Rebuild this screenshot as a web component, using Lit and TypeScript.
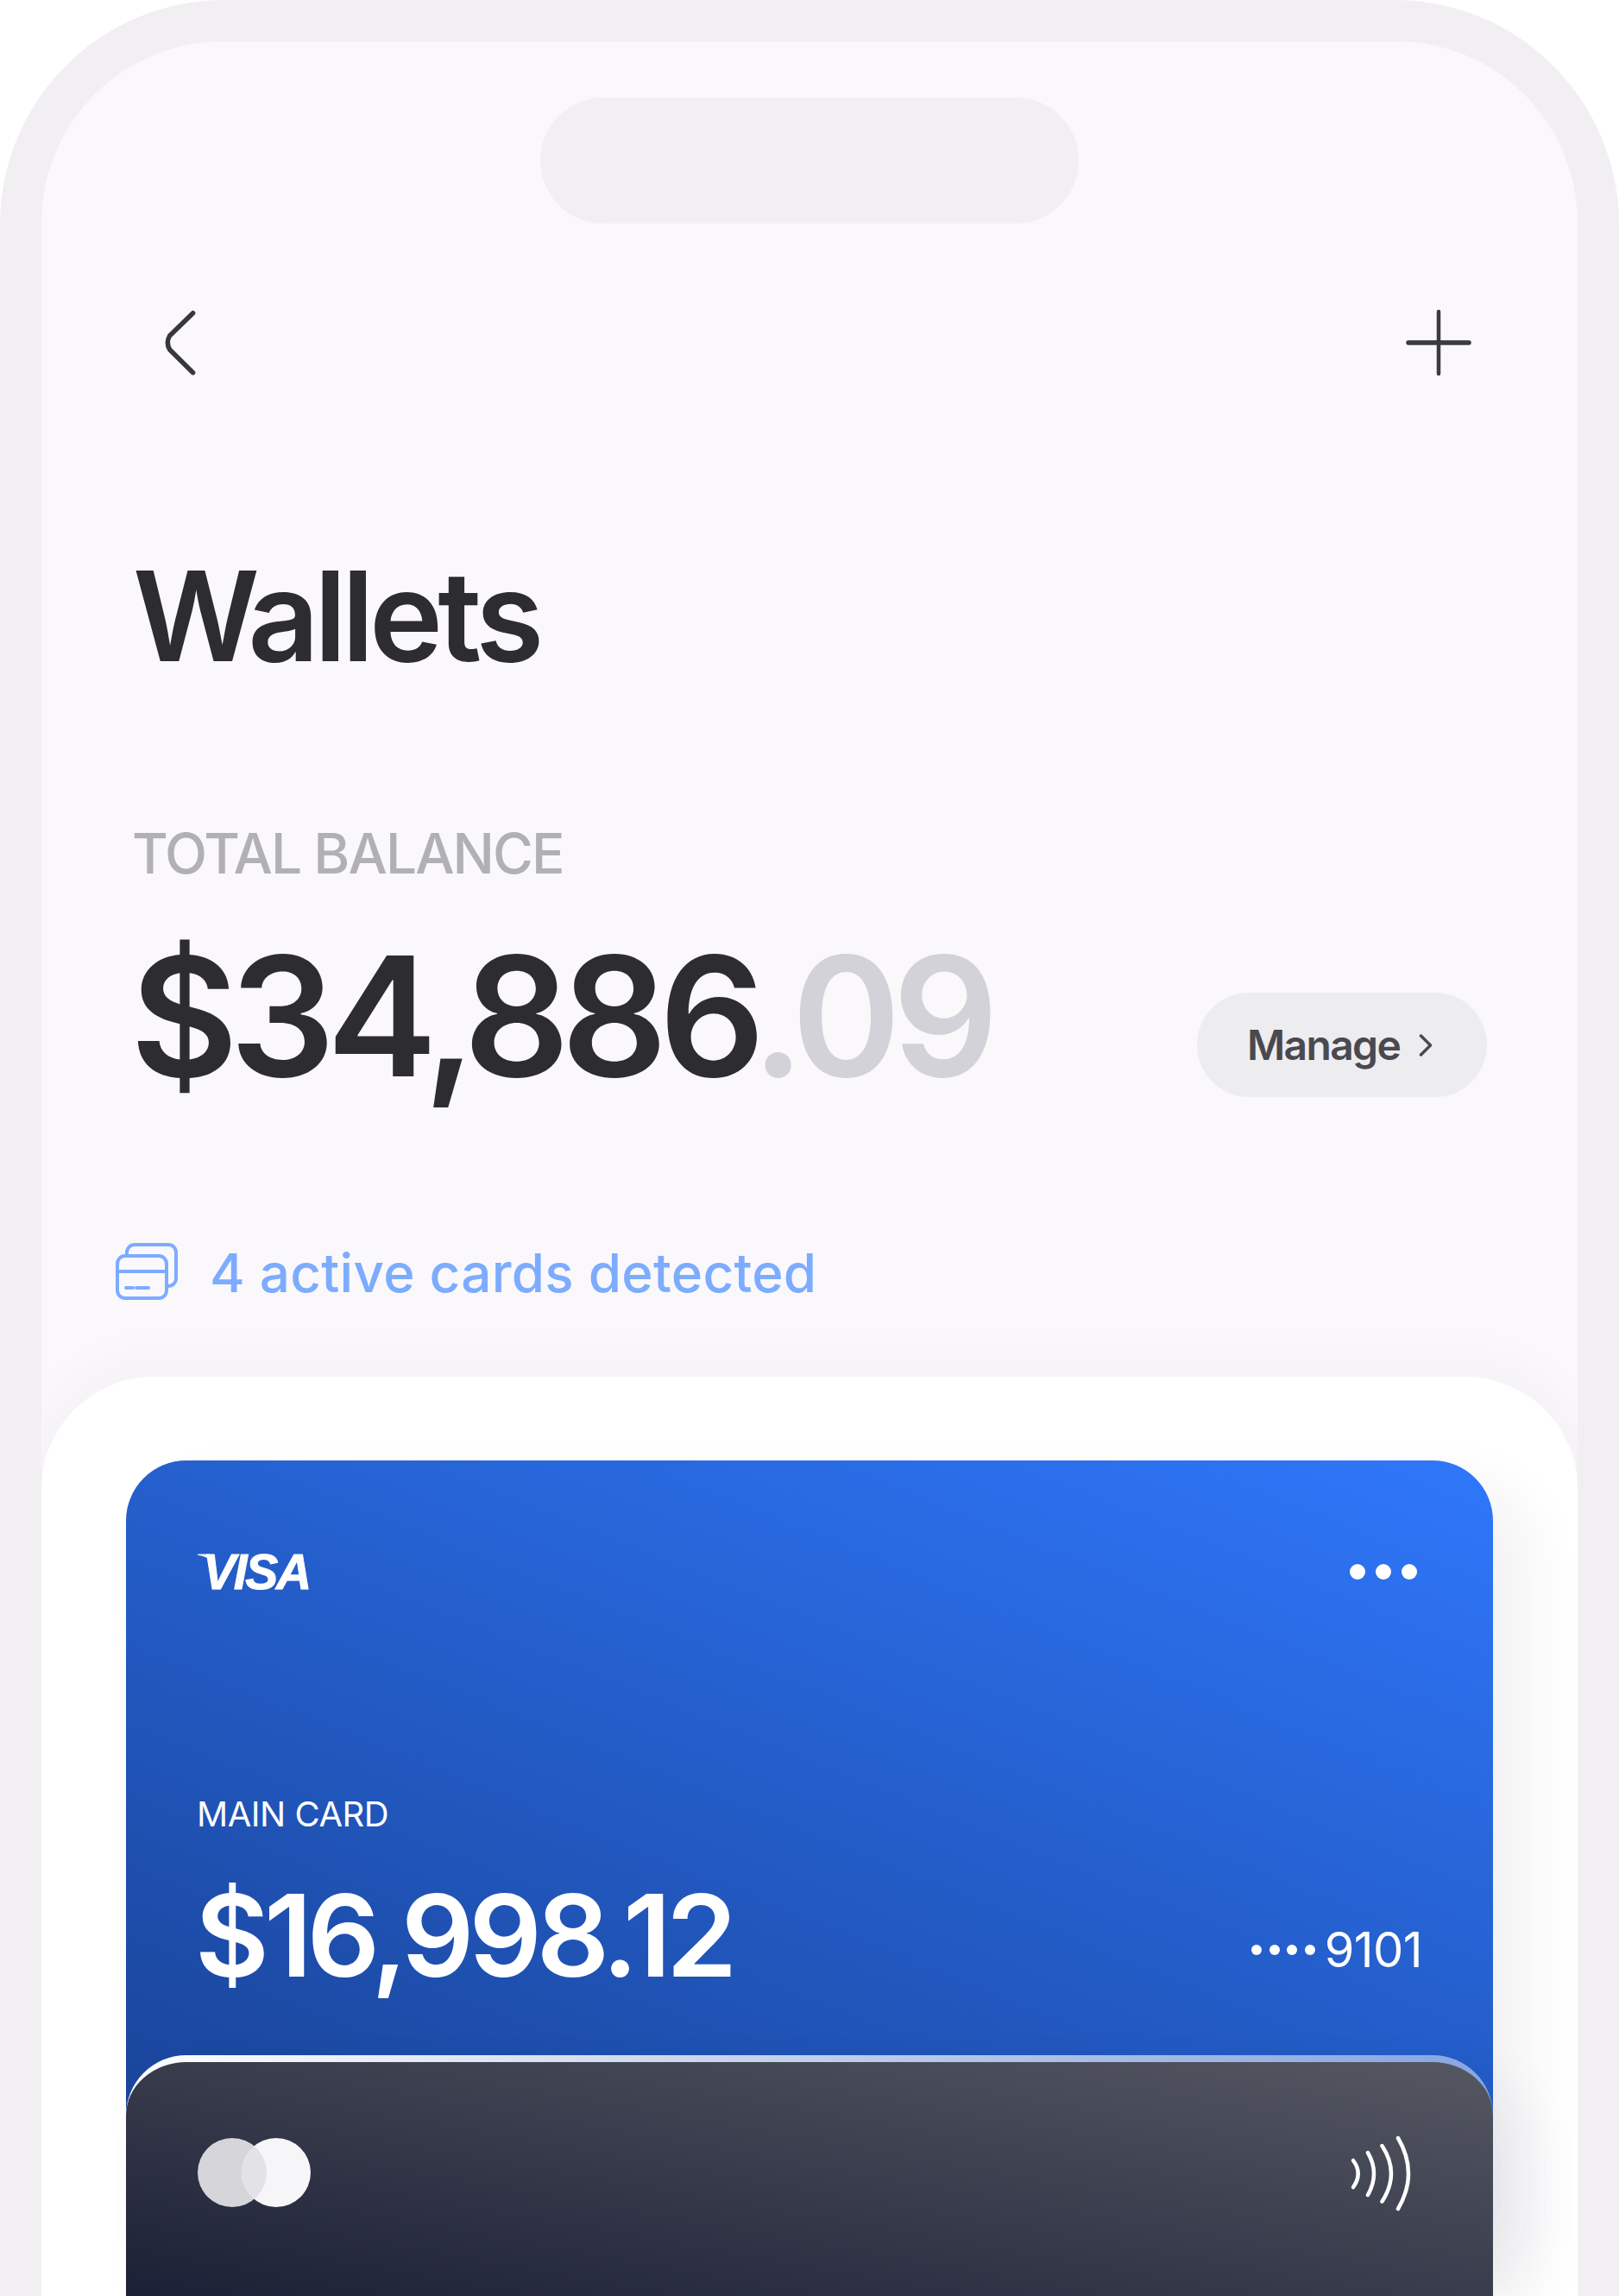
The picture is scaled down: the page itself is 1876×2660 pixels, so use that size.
import { LitElement, html, css } from "lit";
import { customElement } from "lit/decorators.js";

@customElement("app-root")
export class AppRoot extends LitElement {
  static styles = css`
    :host { display: block; width: 1876px; height: 2660px; overflow: hidden; background: #fff; font-family: Inter, "Liberation Sans", sans-serif; }
    * { box-sizing: border-box; }
    .frame { height: 2660px; background: #f1eff2; border-radius: 260px 260px 0 0; padding: 48px 48px 0; }
    .screen { height: 2612px; background: #faf8fb; border-radius: 210px 210px 0 0; display: flex; flex-direction: column; overflow: hidden; }
    .notch { flex: none; align-self: center; width: 624px; height: 146px; margin-top: 65px; border-radius: 73px; background: #f1eff2; }
    .nav { flex: none; display: flex; justify-content: space-between; margin-top: 99px; height: 78px; padding: 0 122px 0 140px; }
    .nav svg { display: block; }
    .title { flex: none; margin: 206px 0 0; padding-left: 106px; font-size: 144px; line-height: 144px; font-weight: 600; letter-spacing: -0.04em; color: #2d2c30; }
    .label { flex: none; margin-top: 171px; padding-left: 105px; font-size: 64px; line-height: 64px; font-weight: 450; letter-spacing: -0.03em; color: #b1b0b6; }
    .balance-row { flex: none; display: flex; justify-content: space-between; align-items: flex-start; margin-top: 60px; padding: 0 105px 0 103px; }
    .balance { font-size: 192px; line-height: 192px; font-weight: 600; letter-spacing: -0.05em; color: #2d2c30; }
    .balance .cents { color: #d3d2d8; }
    .manage { margin-top: 69px; width: 336px; height: 121px; border-radius: 61px; background: #edecef; display: flex; align-items: center; padding-left: 58px; gap: 22px; font-size: 48px; font-weight: 600; letter-spacing: -0.035em; color: #4a494f; }
    .active { flex: none; display: flex; gap: 37px; align-items: flex-start; margin-top: 167px; padding-left: 86px; font-size: 62px; line-height: 62px; font-weight: 500; letter-spacing: 0.25px; color: #7dacff; }
    .active svg { display: block; flex: none; }
    .active span { margin-top: 4px; }
    .sheet { flex: 1; margin-top: 89px; background: #fff; border-radius: 130px 130px 0 0; box-shadow: 0 -12px 70px rgba(50, 40, 70, 0.04); padding: 97px 98px 0; }
    .card { width: 1584px; border-radius: 70px 70px 0 0; box-shadow: 40px 30px 70px rgba(40, 40, 70, 0.06); color: #fff; }
    .blue { height: 900px; padding: 108px 85px 0 83px; background: linear-gradient(202deg, #2f77fb 0%, #173f8f 100%); }
    .row { display: flex; justify-content: space-between; }
    .visa-wrap { position: relative; width: 130px; height: 43px; }
    .visa { font-family: "Liberation Sans", sans-serif; font-weight: 700; font-style: italic; font-size: 57px; line-height: 43px; letter-spacing: -2.3px; color: #fff; display: block; margin-left: 6px; -webkit-text-stroke: 1px #fff; }
    .flick { position: absolute; left: 0; top: 0; display: block; }
    .dots { display: flex; gap: 12px; margin: 12px 3px 0 0; }
    .dots i { width: 18px; height: 18px; border-radius: 50%; background: #fff; }
    .main-label { margin-top: 235px; margin-left: -1px; font-size: 40px; line-height: 48px; font-weight: 400; letter-spacing: -0.012em; }
    .amount-row { display: flex; justify-content: space-between; align-items: flex-start; margin-top: 50px; }
    .amount { margin-left: -3px; font-size: 132px; line-height: 132px; font-weight: 600; letter-spacing: -0.045em; }
    .pan { display: flex; align-items: center; gap: 11px; margin: 53px -3px 0 0; font-size: 56px; line-height: 60px; font-weight: 400; letter-spacing: -0.01em; }
    .pan .pips { display: flex; gap: 8.5px; }
    .pan .pips i { width: 12px; height: 12px; border-radius: 50%; background: #fff; }
    .dark { position: relative; height: 279px; margin-top: -211px; border-top: 8px solid transparent; padding: 88px 85px 0 83px;
      background: linear-gradient(190deg, #555862 0%, #1c2036 100%) padding-box, linear-gradient(90deg, #fff, rgba(255, 255, 255, 0.45)) border-box; }
    .dark svg { display: block; }
    .nfc { margin: -4px 6px 0 0; overflow: visible; }
  `;

  render() {
    return html`
      <div class="frame">
        <div class="screen">
          <div class="notch"></div>
          <div class="nav">
            <svg width="40" height="78" viewBox="0 0 40 78" fill="none" stroke="#38373c" stroke-width="5.5" stroke-linecap="round" stroke-linejoin="round">
              <path d="M35.6 4.7 L8.6 31 Q4 39 8.6 47 L35.6 73.7" />
            </svg>
            <svg width="78" height="78" viewBox="0 0 78 78" fill="none" stroke="#3a3a40" stroke-linecap="round">
              <path d="M39 3 V75" stroke-width="4.5" />
              <path d="M4 39 H74" stroke-width="5.5" />
            </svg>
          </div>
          <h1 class="title">Wallets</h1>
          <div class="label">TOTAL BALANCE</div>
          <div class="balance-row">
            <div class="balance">$34,886<span class="cents">.09</span></div>
            <div class="manage">
              <span>Manage</span>
              <svg width="16" height="26" viewBox="0 0 16 26" fill="none" stroke="#4a494f" stroke-width="3.5" stroke-linecap="round" stroke-linejoin="round">
                <path d="M2.5 2 L13.5 13 L2.5 24" />
              </svg>
            </div>
          </div>
          <div class="active">
            <svg width="72" height="66" viewBox="0 0 72 66" fill="none" stroke="#7dacff" stroke-width="4" stroke-linecap="round">
              <rect x="2" y="15" width="57" height="49" rx="9" />
              <path d="M2 33 H59" />
              <path d="M12 52 H20 M24 52 H38" />
              <path d="M13 15 V11 a9 9 0 0 1 9-9 H61 a9 9 0 0 1 9 9 V41 a9 9 0 0 1-9 9 H59" />
            </svg>
            <span>4 active cards detected</span>
          </div>
          <div class="sheet">
            <div class="card blue">
              <div class="row">
                <div class="visa-wrap">
                  <span class="visa">VISA</span>
                  <svg class="flick" width="30" height="14" viewBox="0 0 30 14" fill="#fff"><path d="M0 0.5 H14 L20 12 Q12 3 0 1.5 Z" /></svg>
                </div>
                <div class="dots"><i></i><i></i><i></i></div>
              </div>
              <div class="main-label">MAIN CARD</div>
              <div class="amount-row">
                <div class="amount">$16,998.12</div>
                <div class="pan"><span class="pips"><i></i><i></i><i></i><i></i></span><span>9101</span></div>
              </div>
            </div>
            <div class="card dark">
              <div class="row">
                <svg width="132" height="80" viewBox="0 0 132 80">
                  <defs><clipPath id="mc"><circle cx="40" cy="40" r="40" /></clipPath></defs>
                  <circle cx="40" cy="40" r="40" fill="#d5d5da" />
                  <circle cx="91" cy="40" r="40" fill="#f6f5f8" />
                  <circle cx="91" cy="40" r="40" fill="#e3e3e7" clip-path="url(#mc)" />
                </svg>
                <svg class="nfc" width="76" height="90" viewBox="0 0 76 90" fill="none" stroke="#fff" stroke-width="4.5" stroke-linecap="round">
                  <path d="M5 30 Q16.4 45 5 61" />
                  <path d="M22 21 Q36 45 22 70" />
                  <path d="M38.5 13 Q59.5 45 38.5 77.5" />
                  <path d="M57 4 Q81 45 57 86" />
                </svg>
              </div>
            </div>
          </div>
        </div>
      </div>
    `;
  }
}
